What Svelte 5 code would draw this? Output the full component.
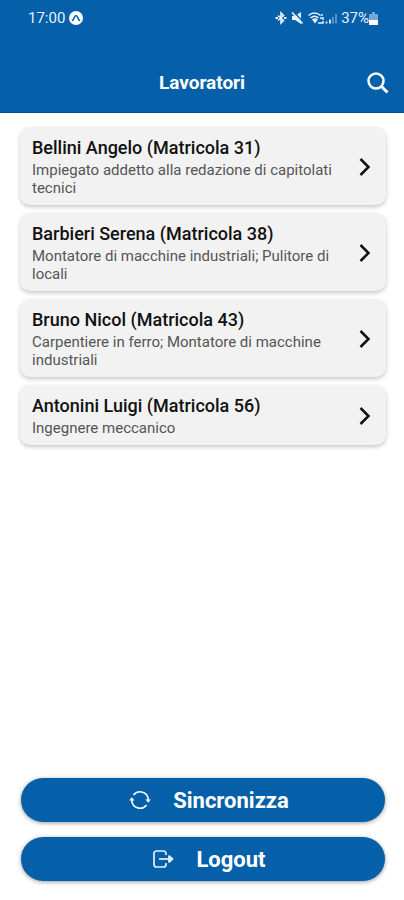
<script>
  let workers = [
    { name: 'Bellini Angelo', number: 31, job: 'Impiegato addetto alla redazione di capitolati tecnici' },
    { name: 'Barbieri Serena', number: 38, job: 'Montatore di macchine industriali; Pulitore di locali' },
    { name: 'Bruno Nicol', number: 43, job: 'Carpentiere in ferro; Montatore di macchine industriali' },
    { name: 'Antonini Luigi', number: 56, job: 'Ingegnere meccanico' },
  ];
</script>

<div class="screen">
  <header>
    <div class="status">
      <div class="status-left">
        <span>17:00</span>
        <svg width="14" height="14" viewBox="0 0 14 14">
          <circle cx="7" cy="7" r="7" fill="#fff" />
          <path d="M3.5 9.5C5 8.5 5.5 4.5 7 4.5S9 8.5 10.5 9.5" fill="none" stroke="#0560a9" stroke-width="1.5" stroke-linecap="round" />
        </svg>
      </div>
      <div class="status-right">
        <svg width="12" height="14" viewBox="0 0 12 14" fill="none" stroke="#e6f1fc" stroke-width="1.6">
          <path d="M3 4.5l5.5 5L6 12V2l2.5 2.5L3 9.5" />
          <path d="M.5 7H3M9 7h2.5" stroke-width="2.2" />
        </svg>
        <svg width="13" height="14" viewBox="0 0 13 14">
          <path d="M1 5h3l6-4v12L4 9H1z" fill="#e6f1fc" />
          <path d="M2.5.5l10 11" stroke="#0560a9" stroke-width="1.5" />
          <path d="M1 1.500l10.500 11" stroke="#e6f1fc" stroke-width="1.8" />
        </svg>
        <svg width="29" height="14" viewBox="0 0 29 14" fill="none" stroke="#e6f1fc" stroke-width="1.5">
          <path d="M.5 4.500c3.500-3.300 8.500-3.300 12 0M2.500 7c2.500-2.200 5.500-2.200 8 0" />
          <path d="M4 8.500L7 12.500l3-4Q7 6 4 8.500z" fill="#e6f1fc" stroke="none" />
          <path d="M12 7h3v2M10 12h5v-2M13 4h2" />
          <path d="M18.500 12.500v-2M22 12.500v-4" stroke-width="1.8" />
          <path d="M25 12.500V6M28 12.500V3" stroke="#5b98cb" stroke-width="1.8" />
        </svg>
        <span>37%</span>
        <svg class="battery" width="9" height="13" viewBox="0 0 9 13">
          <path d="M3 0h3v2h3v6H0V2h3z" fill="#74a8d4" />
          <path d="M0 8h9v5H0z" fill="#fff" />
        </svg>
      </div>
    </div>
    <div class="toolbar">
      <h1>Lavoratori</h1>
      <button class="search" aria-label="Cerca">
        <svg width="22" height="22" viewBox="0 0 22 22" fill="none" stroke="#fff" stroke-width="2.5">
          <circle cx="9" cy="9" r="7.5" />
          <path d="M14.500 14.500l6 6" stroke-width="3" />
        </svg>
      </button>
    </div>
  </header>

  <main>
    {#each workers as worker}
      <button class="card">
        <span class="card-text">
          <span class="name">{worker.name} (Matricola {worker.number})</span>
          <span class="job">{worker.job}</span>
        </span>
        <svg width="12" height="18" viewBox="0 0 12 18" fill="none" stroke="#111" stroke-width="2.5">
          <path d="M1.500 1l8 8-8 8" />
        </svg>
      </button>
    {/each}
  </main>

  <footer>
    <button class="action">
      <svg width="22" height="20" viewBox="0 0 22 20" fill="none" stroke="#fff" stroke-width="1.6">
        <path d="M4.500 5A8.200 8.200 0 0 1 19.200 10M17.500 15A8.200 8.200 0 0 1 2.800 10" />
        <path d="M16.500 9.500h5.300l-2.600 3.200zM.2 10.500h5.300L2.800 7.300z" fill="#fff" stroke="none" />
      </svg>
      Sincronizza
    </button>
    <button class="action">
      <svg width="22" height="18" viewBox="0 0 22 18" fill="none" stroke="#e6f1fc" stroke-width="1.7" stroke-linejoin="round">
        <path d="M14 5V3.500A2.500 2.500 0 0 0 11.500 1H4.500a2.500 2.500 0 0 0-2.500 2.500v11A2.500 2.500 0 0 0 4.500 17h7a2.500 2.500 0 0 0 2.500-2.500V13" />
        <path d="M7 9h11" />
        <path d="M17 6l3.500 3-3.500 3z" fill="#e6f1fc" />
      </svg>
      Logout
    </button>
  </footer>
</div>

<style>
  :global(body) {
    margin: 0;
    background: #fff;
  }

  .screen {
    display: flex;
    flex-direction: column;
    min-height: 100vh;
    font-family: Roboto, 'Liberation Sans', sans-serif;
  }

  button {
    border: 0;
    font-family: inherit;
    cursor: pointer;
  }

  svg {
    flex: none;
  }

  header {
    background: #0560a9;
    border-bottom: 1px solid #044a92;
    color: #fff;
  }

  .status {
    display: flex;
    justify-content: space-between;
    padding: 8px 26px 0 28px;
    font-size: 15px;
    line-height: 20px;
    color: #e6f1fc;
  }

  .status-left,
  .status-right {
    display: flex;
    align-items: center;
    gap: 4px;
  }

  .battery {
    margin-left: -4px;
  }

  .toolbar {
    display: grid;
    grid-template-columns: 1fr auto 1fr;
    align-items: center;
    padding: 25px 15px 0;
    height: 59px;
  }

  h1 {
    grid-column: 2;
    margin: 0;
    font-size: 19px;
    font-weight: 700;
    line-height: 24px;
  }

  .search {
    display: flex;
    justify-self: end;
    padding: 0;
    background: none;
  }

  main {
    display: flex;
    flex: 1;
    flex-direction: column;
    gap: 8px;
    padding: 14px 18px 16px 20px;
  }

  .card {
    display: flex;
    align-items: center;
    gap: 16px;
    padding: 10px 15px 8px 12px;
    border-radius: 10px;
    background: #f2f2f2;
    box-shadow: 0 2px 4px rgba(0, 0, 0, 0.22);
    text-align: left;
  }

  .card-text {
    flex: 1;
  }

  .name,
  .job {
    display: block;
  }

  .name {
    margin-bottom: 2px;
    color: #111;
    font-size: 18px;
    font-weight: 500;
    line-height: 22px;
  }

  .job {
    color: #555;
    font-size: 15px;
    line-height: 18px;
  }

  footer {
    display: flex;
    flex-direction: column;
    gap: 15px;
    padding: 0 19px 19px 21px;
  }

  .action {
    display: flex;
    align-items: center;
    justify-content: center;
    gap: 22px;
    height: 44px;
    padding: 0 0 0 12px;
    border-radius: 22px;
    background: #0560a9;
    box-shadow: 0 1px 4px rgba(0, 0, 0, 0.4);
    color: #fff;
    font-size: 22px;
    font-weight: 700;
  }
</style>
